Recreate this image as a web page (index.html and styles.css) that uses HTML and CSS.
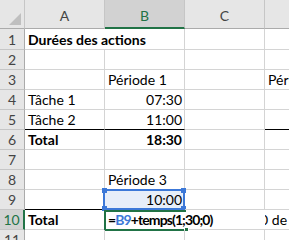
FILE: index.html
```html
<!DOCTYPE html>
<html>

<head>
    <meta charset="UTF-8">
    <title>Durées des actions</title>
    <link rel="stylesheet" href="styles.css">
</head>

<body>
    <div class="sheet">
        <!-- en-tetes de colonnes -->
        <div class="corner">
            <svg width="25" height="29" viewBox="0 0 25 29"><polygon points="21,13 21,25 9,25" fill="#bfbfbf" /></svg>
        </div>
        <div class="colhead">A</div>
        <div class="colhead sel">B</div>
        <div class="colhead">C</div>
        <div class="colhead last"></div>

        <!-- ligne 1 -->
        <div class="rowhead">1</div>
        <div class="cell span2 bold">Durées des actions</div>
        <div class="cell"></div>
        <div class="cell last"></div>

        <!-- ligne 2 -->
        <div class="rowhead">2</div>
        <div class="cell"></div>
        <div class="cell"></div>
        <div class="cell"></div>
        <div class="cell last"></div>

        <!-- ligne 3 -->
        <div class="rowhead">3</div>
        <div class="cell"></div>
        <div class="cell">Période 1</div>
        <div class="cell"></div>
        <div class="cell last">Période 2</div>

        <!-- ligne 4 -->
        <div class="rowhead">4</div>
        <div class="cell">Tâche 1</div>
        <div class="cell num">07:30</div>
        <div class="cell"></div>
        <div class="cell last"></div>

        <!-- ligne 5 -->
        <div class="rowhead">5</div>
        <div class="cell line">Tâche 2</div>
        <div class="cell num line">11:00</div>
        <div class="cell"></div>
        <div class="cell last line"></div>

        <!-- ligne 6 -->
        <div class="rowhead">6</div>
        <div class="cell bold">Total</div>
        <div class="cell num bold">18:30</div>
        <div class="cell"></div>
        <div class="cell last"></div>

        <!-- ligne 7 -->
        <div class="rowhead">7</div>
        <div class="cell"></div>
        <div class="cell"></div>
        <div class="cell"></div>
        <div class="cell last"></div>

        <!-- ligne 8 -->
        <div class="rowhead">8</div>
        <div class="cell"></div>
        <div class="cell">Période 3</div>
        <div class="cell"></div>
        <div class="cell last"></div>

        <!-- ligne 9 -->
        <div class="rowhead">9</div>
        <div class="cell line"></div>
        <div class="cell num line ref">
            10:00
            <span class="refbox">
                <i class="h tl"></i><i class="h tr"></i><i class="h bl"></i><i class="h br"></i>
            </span>
        </div>
        <div class="cell"></div>
        <div class="cell last"></div>

        <!-- ligne 10 -->
        <div class="rowhead sel">10</div>
        <div class="cell bold">Total</div>
        <div class="cell span2 bold edit">
            =<span class="blue">B9</span>+temps(1;30;0)
            <span class="editbox"><i class="fill"></i></span>
        </div>
        <div class="cell last clip"><span class="cut">30 de</span></div>

        <!-- ligne 11 -->
        <div class="rowhead">11</div>
        <div class="cell"></div>
        <div class="cell"></div>
        <div class="cell"></div>
        <div class="cell last"></div>
    </div>
</body>

</html>
```

FILE: styles.css
```css
* {
    padding: 0;
    margin: 0;
    box-sizing: border-box;
}

body {
    background: #ffffff;
    overflow: hidden;
    font-family: Lato, "Liberation Sans", sans-serif;
    font-size: 14px;
    color: #000000;
}

.sheet {
    display: grid;
    grid-template-columns: 25px 80px 80px 80px 80px;
    grid-template-rows: 29px 21px repeat(10, 20px);
    width: 289px;
    height: 240px;
    overflow: hidden;
}

.corner {
    background: #e6e6e6;
    border-right: 1px solid #c6c6c6;
    border-bottom: 1px solid #ababab;
}

.colhead {
    background: #e6e6e6;
    border-right: 1px solid #c6c6c6;
    border-bottom: 1px solid #ababab;
    color: #444444;
    display: flex;
    align-items: flex-end;
    justify-content: center;
    padding-bottom: 4px;
    font-size: 14px;
}

.colhead.sel {
    background: #d2d2d2;
    color: #217346;
    border-bottom: 2px solid #217346;
    padding-bottom: 3px;
}

.rowhead {
    background: #e6e6e6;
    border-right: 1px solid #ababab;
    border-bottom: 1px solid #c6c6c6;
    color: #444444;
    display: flex;
    align-items: flex-end;
    justify-content: center;
    padding-bottom: 1px;
    font-size: 14px;
}

.rowhead.sel {
    background: #d2d2d2;
    color: #217346;
    border-right: 2px solid #217346;
}

.cell {
    position: relative;
    border-right: 1px solid #d4d4d4;
    border-bottom: 1px solid #d4d4d4;
    display: flex;
    align-items: flex-end;
    padding: 0 2px 1px 3px;
    white-space: nowrap;
}

.cell.last {
    border-right: none;
}

.span2 {
    grid-column: span 2;
}

.bold {
    font-weight: bold;
}

.num {
    justify-content: flex-end;
}

.line {
    border-bottom-color: #000000;
}

.ref {
    background: #e7eef9;
}

.refbox {
    position: absolute;
    left: -2px;
    top: -1px;
    width: 82px;
    height: 21px;
    border: 2px solid #3c78d8;
}

.h {
    position: absolute;
    width: 5px;
    height: 5px;
    background: #3c78d8;
}

.tl {
    left: -3px;
    top: -3px;
}

.tr {
    right: -3px;
    top: -3px;
}

.bl {
    left: -3px;
    bottom: -3px;
}

.br {
    right: -3px;
    bottom: -3px;
}

.edit {
    border-right: none;
    letter-spacing: -0.9px;
}

.blue {
    color: #3c78d8;
}

.editbox {
    position: absolute;
    left: -1px;
    top: 0;
    width: 82px;
    height: 21px;
    border: 2px solid #217346;
    border-right: none;
}

.fill {
    position: absolute;
    right: -3px;
    bottom: -3px;
    width: 5px;
    height: 5px;
    background: #217346;
    border: 1px solid #ffffff;
}

.clip {
    overflow: hidden;
}

.cut {
    margin-left: -16px;
}
```
